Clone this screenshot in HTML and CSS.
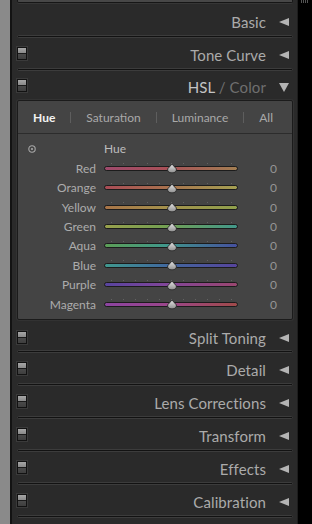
FILE: index.html
```html
<!DOCTYPE html>
<html>
<head>
<meta charset="utf-8">
<link rel="stylesheet" href="styles.css">
</head>
<body>
<div class="page">
  <div class="strip"></div>
  <div class="panel">
    <div class="prev"></div>

    <div class="hdr first"><span class="title">Basic</span><span class="arrow"></span></div>
    <div class="divider"></div>

    <div class="hdr"><span class="switch"></span><span class="title">Tone Curve</span><span class="arrow"></span></div>
    <div class="divider"></div>

    <div class="hdr hsl"><span class="switch"></span><span class="title">HSL <span class="dim">/ Color</span></span><span class="arrow down"></span></div>

    <div class="box">
      <div class="tabs">
        <span class="tab active">Hue</span><span class="sep"></span>
        <span class="tab">Saturation</span><span class="sep"></span>
        <span class="tab">Luminance</span><span class="sep"></span>
        <span class="tab">All</span>
      </div>
      <div class="rows">
        <div class="row head">
          <span class="target"><svg width="8" height="8" viewBox="0 0 8 8"><circle cx="4" cy="4" r="3.2" fill="none" stroke="#a8a8a8" stroke-width="1.1"/><circle cx="4" cy="4" r="1.1" fill="#a8a8a8"/></svg></span>
          <span class="headlabel">Hue</span>
          <span></span>
        </div>
        <div class="row red"><span class="label">Red</span><span class="track"><span class="bar"></span><span class="thumb"><svg width="10" height="10" viewBox="0 0 10 10"><defs><linearGradient id="tg" x1="0" y1="0" x2="0" y2="1"><stop offset="0" stop-color="#e4e4e4"/><stop offset="1" stop-color="#8e8e8e"/></linearGradient></defs><path d="M5 0.6 L9.4 5.4 Q9.6 9.4 5 9.4 Q0.4 9.4 0.6 5.4 Z" fill="url(#tg)" stroke="#262626" stroke-width="0.9"/></svg></span></span><span class="val">0</span></div>
        <div class="row orange"><span class="label">Orange</span><span class="track"><span class="bar"></span><span class="thumb"><svg width="10" height="10" viewBox="0 0 10 10"><path d="M5 0.6 L9.4 5.4 Q9.6 9.4 5 9.4 Q0.4 9.4 0.6 5.4 Z" fill="url(#tg)" stroke="#262626" stroke-width="0.9"/></svg></span></span><span class="val">0</span></div>
        <div class="row yellow"><span class="label">Yellow</span><span class="track"><span class="bar"></span><span class="thumb"><svg width="10" height="10" viewBox="0 0 10 10"><path d="M5 0.6 L9.4 5.4 Q9.6 9.4 5 9.4 Q0.4 9.4 0.6 5.4 Z" fill="url(#tg)" stroke="#262626" stroke-width="0.9"/></svg></span></span><span class="val">0</span></div>
        <div class="row green"><span class="label">Green</span><span class="track"><span class="bar"></span><span class="thumb"><svg width="10" height="10" viewBox="0 0 10 10"><path d="M5 0.6 L9.4 5.4 Q9.6 9.4 5 9.4 Q0.4 9.4 0.6 5.4 Z" fill="url(#tg)" stroke="#262626" stroke-width="0.9"/></svg></span></span><span class="val">0</span></div>
        <div class="row aqua"><span class="label">Aqua</span><span class="track"><span class="bar"></span><span class="thumb"><svg width="10" height="10" viewBox="0 0 10 10"><path d="M5 0.6 L9.4 5.4 Q9.6 9.4 5 9.4 Q0.4 9.4 0.6 5.4 Z" fill="url(#tg)" stroke="#262626" stroke-width="0.9"/></svg></span></span><span class="val">0</span></div>
        <div class="row blue"><span class="label">Blue</span><span class="track"><span class="bar"></span><span class="thumb"><svg width="10" height="10" viewBox="0 0 10 10"><path d="M5 0.6 L9.4 5.4 Q9.6 9.4 5 9.4 Q0.4 9.4 0.6 5.4 Z" fill="url(#tg)" stroke="#262626" stroke-width="0.9"/></svg></span></span><span class="val">0</span></div>
        <div class="row purple"><span class="label">Purple</span><span class="track"><span class="bar"></span><span class="thumb"><svg width="10" height="10" viewBox="0 0 10 10"><path d="M5 0.6 L9.4 5.4 Q9.6 9.4 5 9.4 Q0.4 9.4 0.6 5.4 Z" fill="url(#tg)" stroke="#262626" stroke-width="0.9"/></svg></span></span><span class="val">0</span></div>
        <div class="row magenta"><span class="label">Magenta</span><span class="track"><span class="bar"></span><span class="thumb"><svg width="10" height="10" viewBox="0 0 10 10"><path d="M5 0.6 L9.4 5.4 Q9.6 9.4 5 9.4 Q0.4 9.4 0.6 5.4 Z" fill="url(#tg)" stroke="#262626" stroke-width="0.9"/></svg></span></span><span class="val">0</span></div>
      </div>
    </div>

    <div class="hdr afterbox"><span class="switch"></span><span class="title">Split Toning</span><span class="arrow"></span></div>
    <div class="divider"></div>
    <div class="hdr"><span class="switch"></span><span class="title">Detail</span><span class="arrow"></span></div>
    <div class="divider"></div>
    <div class="hdr"><span class="switch"></span><span class="title">Lens Corrections</span><span class="arrow"></span></div>
    <div class="divider"></div>
    <div class="hdr"><span class="switch"></span><span class="title">Transform</span><span class="arrow"></span></div>
    <div class="divider"></div>
    <div class="hdr"><span class="switch"></span><span class="title">Effects</span><span class="arrow"></span></div>
    <div class="divider"></div>
    <div class="hdr"><span class="switch"></span><span class="title">Calibration</span><span class="arrow"></span></div>
    <div class="divider"></div>
  </div>
  <div class="rail"><div class="grip"></div></div>
</div>
</body>
</html>
```

FILE: styles.css
```css
html, body {
  margin: 0;
  padding: 0;
  background: #000;
}
body {
  font-family: Lato, "Liberation Sans", sans-serif;
  width: 312px;
  height: 524px;
  overflow: hidden;
}
.page {
  display: flex;
  height: 524px;
}
.strip {
  width: 10px;
  flex: none;
  background: #8a8a8a;
}
.panel {
  width: 288px;
  flex: none;
  box-sizing: border-box;
  background: #2a2a2a;
  border-left: 2px solid #131313;
  border-right: 1px solid #1d1d1d;
  padding: 0 4px 0 5px;
  display: flex;
  flex-direction: column;
}
.rail {
  flex: 1;
  background: #000;
}
.grip {
  margin: 0 0 0 3px;
  width: 7px;
  height: 3px;
  background: repeating-linear-gradient(to right, #555 0 1px, transparent 1px 2px);
}
.prev {
  height: 2px;
  flex: none;
  background: #474747;
  border: 1px solid #161616;
  border-top: none;
  border-radius: 0 0 2px 2px;
  box-shadow: 0 1px 0 #363636;
}
.hdr {
  height: 30px;
  flex: none;
  box-sizing: border-box;
  padding: 3px 4px 0 0;
  display: flex;
  align-items: center;
}
.hdr.first {
  height: 32px;
  padding-top: 6px;
}
.hdr.hsl {
  height: 29px;
  padding-top: 2px;
}
.hdr.afterbox {
  padding-top: 6px;
}
.title {
  margin-left: auto;
  font-size: 15px;
  color: #ababab;
  letter-spacing: 0.1px;
}
.hsl .title {
  color: #c4c4c4;
}
.dim {
  color: #6f6f6f;
}
.arrow {
  width: 0;
  height: 0;
  margin-left: 13px;
  border-top: 4.5px solid transparent;
  border-bottom: 4.5px solid transparent;
  border-right: 10px solid #b4b4b4;
}
.arrow.down {
  border-left: 5px solid transparent;
  border-right: 5px solid transparent;
  border-top: 9px solid #b4b4b4;
  border-bottom: none;
  margin-top: 2px;
}
.switch {
  width: 8px;
  height: 11px;
  flex: none;
  border: 1px solid #121212;
  background: linear-gradient(to bottom, #a6a6a6 0, #8a8a8a 45%, #1a1a1a 45%, #1a1a1a 55%, #4a4a4a 55%, #3e3e3e 100%);
  box-shadow: 0 0 0 1px #3a3a3a;
  margin-top: -2px;
}
.divider {
  height: 1px;
  flex: none;
  background: #121212;
  border: 1px solid #3c3c3c;
  border-radius: 2px;
}
.box {
  height: 220px;
  flex: none;
  box-sizing: border-box;
  background: #444444;
  border: 1px solid #1b1b1b;
  border-radius: 2px;
  box-shadow: 0 0 0 1px #323232;
}
.tabs {
  height: 32px;
  border-bottom: 1px solid #2c2c2c;
  display: flex;
  align-items: center;
  gap: 15px;
  padding-left: 15px;
  font-size: 12px;
  color: #a9a9a9;
}
.tab.active {
  color: #f2f2f2;
  font-weight: bold;
}
.sep {
  width: 1px;
  height: 11px;
  background: #5e5e5e;
}
.rows {
  padding-top: 5.3px;
}
.row {
  height: 19.4px;
  display: grid;
  grid-template-columns: 78px 134px 31px;
  column-gap: 8px;
  align-items: center;
  font-size: 12px;
}
.label {
  text-align: right;
  color: #acacac;
}
.target {
  padding-left: 10px;
  display: flex;
  align-items: center;
}
.headlabel {
  color: #bdbdbd;
}
.val {
  text-align: right;
  color: #959595;
}
.track {
  position: relative;
  height: 100%;
}
.track::before {
  content: "";
  position: absolute;
  left: 7px;
  width: 121px;
  top: calc(50% - 5px);
  height: 1px;
  background: repeating-linear-gradient(to right, #626262 0 1px, transparent 1px 12px);
}
.bar {
  position: absolute;
  left: 0;
  right: 0;
  top: 50%;
  height: 5px;
  margin-top: -2.5px;
  box-sizing: border-box;
  border: 1px solid #1c1c1c;
  border-radius: 3px;
}
.thumb {
  position: absolute;
  left: calc(50% + 1px);
  top: 50%;
  width: 10px;
  height: 10px;
  transform: translate(-50%, -45%);
  display: block;
}
.thumb svg {
  display: block;
}
.red .bar { background: linear-gradient(to right, #9e4a6c, #a85058 45%, #a27e52); }
.orange .bar { background: linear-gradient(to right, #a84c56, #a8704e 45%, #a4a052); }
.yellow .bar { background: linear-gradient(to right, #a87448, #a4904c 45%, #90a04c); }
.green .bar { background: linear-gradient(to right, #98a04c, #74a052 45%, #42988a); }
.aqua .bar { background: linear-gradient(to right, #5c9e56, #40988a 45%, #45509e); }
.blue .bar { background: linear-gradient(to right, #40988e, #406a9e 45%, #56449c); }
.purple .bar { background: linear-gradient(to right, #58449e, #80469a 45%, #9a4670); }
.magenta .bar { background: linear-gradient(to right, #8c44a0, #9a468c 45%, #a04a4a); }
```
